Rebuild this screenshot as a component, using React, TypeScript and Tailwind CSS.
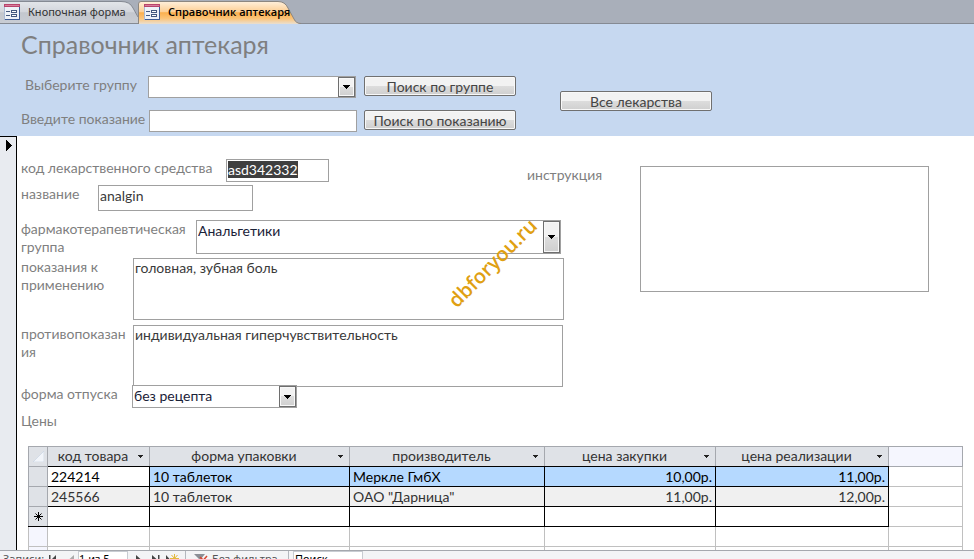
import { useEffect, useRef, type ReactNode } from 'react'

interface Price {
  code: string
  pack: string
  maker: string
  buy: string
  sell: string
}

const prices: Price[] = [
  { code: '224214', pack: '10 таблеток', maker: 'Меркле ГмбХ', buy: '10,00р.', sell: '11,00р.' },
  { code: '245566', pack: '10 таблеток', maker: 'ОАО "Дарница"', buy: '11,00р.', sell: '12,00р.' },
]

const columns = ['код товара', 'форма упаковки', 'производитель', 'цена закупки', 'цена реализации']

const box = 'block border border-[#a0a0a0] bg-white px-px text-sm leading-[18px] text-[#3a3a3a] outline-none'

function FormIcon() {
  return (
    <svg width="16" height="16" viewBox="0 0 16 16" className="shrink-0" shapeRendering="crispEdges">
      <rect width="16" height="15" fill="#eef2f8" />
      <rect width="16" height="3" fill="#b8446c" />
      <rect x="1" y="1" width="14" height="1" fill="#d87c9a" />
      <path d="M0 3v12h15V3" fill="none" stroke="#a9b9d3" />
      <path d="M15 3v12M1 15h15" fill="none" stroke="#3d5c96" />
      <path d="M2 7.5h4M2 11.5h4" stroke="#44597f" />
      <rect x="7.5" y="6.5" width="5" height="2" fill="#fff" stroke="#44597f" />
      <rect x="7.5" y="10.5" width="5" height="2" fill="#fff" stroke="#44597f" />
    </svg>
  )
}

function Tab({ active, children }: { active?: boolean; children: ReactNode }) {
  return (
    <button
      role="tab"
      aria-selected={!!active}
      className={
        active
          ? 'relative flex h-6 w-[163px] items-center gap-2 pl-1.5 font-["Open_Sans"] text-[11px] font-semibold text-black'
          : 'relative flex h-6 w-[138px] items-center gap-2 pl-1 font-["Noto_Sans"] text-[11px] text-[#333]'
      }
    >
      {active ? (
        <svg className="absolute inset-0" width="163" height="24" viewBox="0 0 163 24">
          <defs>
            <linearGradient id="on" x1="0" y1="0" x2="0" y2="1">
              <stop offset="0" stopColor="#fff0dc" />
              <stop offset="0.45" stopColor="#fdcf95" />
              <stop offset="0.5" stopColor="#fbb04f" />
              <stop offset="0.75" stopColor="#fcc376" />
              <stop offset="1" stopColor="#eadfd0" />
            </linearGradient>
          </defs>
          <path d="M.5 24V4Q.5 1.500 3 1.500H140Q147 1.500 150 8L156 19Q158 23.500 163 24Z" fill="url(#on)" />
          <path d="M.5 24V4Q.5 1.500 3 1.500H140Q147 1.500 150 8L156 19Q158 23.500 163 23.500" fill="none" stroke="#8d8780" />
        </svg>
      ) : (
        <svg className="absolute inset-0" width="138" height="24" viewBox="0 0 138 24">
          <defs>
            <linearGradient id="off" x1="0" y1="0" x2="0" y2="1">
              <stop offset="0" stopColor="#e3e6ea" />
              <stop offset="0.45" stopColor="#d3d6dc" />
              <stop offset="0.5" stopColor="#c3c7ce" />
              <stop offset="1" stopColor="#c9cdd4" />
            </linearGradient>
          </defs>
          <path d="M0 24V1.500H121Q130 1.500 133 8L138 17V24Z" fill="url(#off)" />
          <path d="M0 1.500H121Q130 1.500 133 8L138 17M0 23.500H138" fill="none" stroke="#858a93" />
        </svg>
      )}
      <span className="relative">
        <FormIcon />
      </span>
      <span className="relative whitespace-nowrap">{children}</span>
    </button>
  )
}

function Combo({ id, value, className }: { id: string; value: string; className: string }) {
  return (
    <div className={`relative shrink-0 border border-[#a0a0a0] bg-white ${className}`}>
      <select
        id={id}
        className="block h-full w-full appearance-none bg-transparent px-px pb-px text-sm leading-[18px] text-[#1a2238] outline-none"
      >
        <option>{value}</option>
      </select>
      <span className="pointer-events-none absolute inset-y-0 right-0 flex w-[17px] items-center justify-center border border-[#6e6e6e] bg-linear-to-b from-[#f2f2f2] from-50% via-[#dddddd] via-50% to-[#cfcfcf] shadow-[inset_0_0_0_1px_#f8f8f8]">
        <svg width="7" height="4" viewBox="0 0 7 4" shapeRendering="crispEdges">
          <path d="M0 0h7v1H6v1H5v1H4v1H3V3H2V2H1V1H0z" fill="#000" />
        </svg>
      </span>
    </div>
  )
}

function PushButton({ children }: { children: ReactNode }) {
  return (
    <button className="h-5 w-[152px] shrink-0 overflow-hidden rounded-xs border border-[#707070] bg-linear-to-b from-[#f2f2f2] from-50% via-[#dddddd] via-50% to-[#cfcfcf] pt-px text-sm leading-[18px] text-[#444] shadow-[inset_0_0_0_1px_#f8f8f8]">
      {children}
    </button>
  )
}

function Field({ id, label, labelClass, className, children }: {
  id: string
  label: string
  labelClass: string
  className?: string
  children: ReactNode
}) {
  return (
    <div className={`flex items-start ${className ?? ''}`}>
      <label htmlFor={id} className={`shrink-0 ${labelClass}`}>
        {label}
      </label>
      {children}
    </div>
  )
}

function PriceTable() {
  const cell = 'border border-black px-[3px]'
  const spare = 'border border-[#c0c0c0]'
  return (
    <table className="h-[121px] w-full table-fixed border-collapse text-sm leading-[18px] text-[#333]">
      <colgroup>
        <col className="w-[19px]" />
        <col className="w-[102px]" />
        <col className="w-[200px]" />
        <col className="w-[195px]" />
        <col className="w-[171px]" />
        <col className="w-[173px]" />
        <col />
      </colgroup>
      <thead>
        <tr className="h-5 bg-[#dfe2e7]">
          <th className="border border-[#a5a8ae] p-0">
            <svg width="11" height="11" viewBox="0 0 11 11" className="ml-1">
              <path d="M11 0v11H0z" fill="#f2f5fa" stroke="#c5d2e2" strokeWidth=".6" />
            </svg>
          </th>
          {columns.map((c) => (
            <th key={c} className="border border-[#a5a8ae] border-b-black p-0 font-normal">
              <div className="flex items-center pr-1.5">
                <span className="flex-1 pb-px text-center">{c}</span>
                <svg width="5" height="3" viewBox="0 0 5 3" shapeRendering="crispEdges">
                  <path d="M0 0h5v1H4v1H3v1H2V2H1V1H0z" fill="#222" />
                </svg>
              </div>
            </th>
          ))}
          <th className="border border-[#a5a8ae] border-l-black bg-[#f5f6fe] p-0" />
        </tr>
      </thead>
      <tbody>
        {prices.map((p, i) => (
          <tr key={p.code} className={i === 0 ? 'h-5 bg-[#b5d9ff] text-black' : 'h-5 bg-[#f0f0f0]'}>
            <td className="border border-[#a5a8ae] bg-[#dfe2e7]" />
            <td className={i === 0 ? `${cell} bg-white` : cell}>{p.code}</td>
            <td className={cell}>{p.pack}</td>
            <td className={cell}>{p.maker}</td>
            <td className={`${cell} text-right`}>{p.buy}</td>
            <td className={`${cell} text-right`}>{p.sell}</td>
            <td className={`${spare} bg-white`} />
          </tr>
        ))}
        <tr className="h-5">
          <td className="border border-[#a5a8ae] border-b-black bg-[#dfe2e7] p-0">
            <svg width="9" height="9" viewBox="0 0 9 9" className="mx-auto">
              <path d="M4.500 0v9M0 4.500h9M1.500 1.500l6 6M7.500 1.500l-6 6" stroke="#000" />
            </svg>
          </td>
          {columns.map((c) => (
            <td key={c} className={cell} />
          ))}
          <td className={spare} />
        </tr>
        <tr className="h-5">
          <td className={`${spare} bg-[#f5f6fe]`} />
          {columns.map((c) => (
            <td key={c} className={spare} />
          ))}
          <td className={spare} />
        </tr>
        <tr className="h-5">
          <td className={`${spare} bg-[#f5f6fe]`} />
          {columns.map((c) => (
            <td key={c} className={spare} />
          ))}
          <td className={spare} />
        </tr>
      </tbody>
    </table>
  )
}

export default function App() {
  const codeRef = useRef<HTMLInputElement>(null)

  useEffect(() => {
    codeRef.current?.focus()
    codeRef.current?.select()
  }, [])

  return (
    <div className='flex h-screen flex-col overflow-hidden bg-white font-["Lato","Open_Sans",sans-serif] text-sm leading-[18px] text-[#7f7f7f]'>
      <div role="tablist" className="flex h-6 shrink-0 border-b border-[#858a93] bg-[#a9afba]">
        <Tab>Кнопочная форма</Tab>
        <Tab active>Справочник аптекаря</Tab>
      </div>

      <header className="shrink-0 bg-[#c6d8f0] pt-1 pb-1 pl-[21px]">
        <h1 className="text-[25px] leading-8">Справочник аптекаря</h1>
        <div className="flex items-start gap-11 pt-4">
          <div className="flex flex-col gap-3">
            <div className="flex">
              <label htmlFor="group" className="w-[127px] shrink-0 pl-1">Выберите группу</label>
              <Combo id="group" value="" className="mr-2 h-[22px] w-52" />
              <PushButton>Поиск по группе</PushButton>
            </div>
            <div className="flex">
              <label htmlFor="symptom" className="w-32 shrink-0">Введите показание</label>
              <input id="symptom" className={`${box} mr-[7px] h-[22px] w-52`} />
              <PushButton>Поиск по показанию</PushButton>
            </div>
          </div>
          <div className="pt-[15px]">
            <PushButton>Все лекарства</PushButton>
          </div>
        </div>
      </header>

      <main className="flex min-h-0 flex-1 overflow-hidden">
        <div className="w-[17px] shrink-0 border-t border-r border-black bg-[#e8ebf0] pt-[3px] pl-1.5">
          <svg width="6" height="11" viewBox="0 0 6 11" shapeRendering="crispEdges">
            <path d="M0 0L6 5.500L0 11z" fill="#000" />
          </svg>
        </div>
        <div className="relative min-w-0 flex-1 pt-[23px] pr-[11px] pl-1">
          <div className="grid grid-cols-[506px_37px_1fr]">
            <div className="col-start-1 col-end-3 row-start-1">
              <Field id="code" label="код лекарственного средства" labelClass="w-[205px]">
                <input
                  id="code"
                  ref={codeRef}
                  defaultValue="asd342332"
                  className={`${box} h-[23px] w-[103px] pb-0.5 selection:bg-[#3f3f3f] selection:text-white`}
                />
              </Field>
              <Field id="name" label="название" labelClass="w-[77px]" className="mt-[3px]">
                <input id="name" defaultValue="analgin" className={`${box} h-[26px] w-[155px] pb-1.5`} />
              </Field>
              <Field id="kind" label="фармакотерапевтическая группа" labelClass="w-[175px]" className="mt-[9px]">
                <Combo id="kind" value="Анальгетики" className="h-[34px] w-[365px] [&>select]:pb-3" />
              </Field>
              <Field id="use" label="показания к применению" labelClass="w-28" className="mt-0.5">
                <textarea
                  id="use"
                  defaultValue="головная, зубная боль"
                  className={`${box} h-[62px] w-[431px] shrink-0 resize-none`}
                />
              </Field>
              <Field id="avoid" label="противопоказания" labelClass="w-28 break-all pr-1" className="mt-[5px]">
                <textarea
                  id="avoid"
                  defaultValue="индивидуальная гиперчувствительность"
                  className={`${box} h-[62px] w-[430px] shrink-0 resize-none`}
                />
              </Field>
              <Field id="release" label="форма отпуска" labelClass="w-[111px]" className="-mt-0.5">
                <Combo id="release" value="без рецепта" className="h-[23px] w-[165px]" />
              </Field>
            </div>
            <div className="col-start-2 col-end-4 row-start-1 flex items-start self-start pt-[7px]">
              <label htmlFor="manual" className="w-[113px] shrink-0">инструкция</label>
              <textarea id="manual" className={`${box} h-[126px] w-full max-w-[289px] resize-none`} />
            </div>
          </div>

          <h2 className="pt-1">Цены</h2>
          <div className="pt-4 pl-[7px]">
            <PriceTable />
          </div>

          <span className='pointer-events-none absolute top-[115px] left-[418px] -rotate-45 font-["Open_Sans"] text-xl leading-6 font-semibold text-[#e0a012]'>
            dbforyou.ru
          </span>
        </div>
      </main>

      <footer className='h-[9px] shrink-0 overflow-hidden border-t border-[#a5a8ae] bg-[#f3f4f6] font-["Noto_Sans"] text-[11px] leading-4 text-[#555]'>
        <div className="flex h-4 items-center pl-[3px]">
          <span className="w-[46px]">Записи:</span>
          <button aria-label="Первая запись" className="w-5">
            <svg width="8" height="9" viewBox="0 0 8 9"><path d="M0 0h1.500v9H0zM7 0v9L2.500 4.500z" fill="#444" /></svg>
          </button>
          <button aria-label="Предыдущая запись" className="w-[9px]">
            <svg width="5" height="9" viewBox="0 0 5 9"><path d="M5 0v9L0 4.500z" fill="#aaa" /></svg>
          </button>
          <input aria-label="Текущая запись" defaultValue="1 из 5" className="h-4 w-[50px] border border-[#c8ccd2] bg-white text-black" />
          <button aria-label="Следующая запись" className="ml-2 w-4">
            <svg width="5" height="9" viewBox="0 0 5 9"><path d="M0 0v9L5 4.500z" fill="#444" /></svg>
          </button>
          <button aria-label="Последняя запись" className="w-[14px]">
            <svg width="8" height="9" viewBox="0 0 8 9"><path d="M6 0h1.500v9H6zM0 0v9L5 4.500z" fill="#444" /></svg>
          </button>
          <button aria-label="Новая запись" className="w-[19px]">
            <svg width="13" height="10" viewBox="0 0 13 10">
              <path d="M0 1v9L4 5.500z" fill="#444" />
              <path d="M8.500 0v9M4 4.500h9M5.500 1l6 7M11.500 1l-6 7" stroke="#e3b93c" />
            </svg>
          </button>
          <button className="flex h-4 w-[104px] items-center gap-1 border-x border-[#b4b8be] pl-2 whitespace-nowrap">
            <svg width="14" height="12" viewBox="0 0 14 12">
              <path d="M0 1h11L7 6v6L5 10V6z" fill="#8b8f96" />
              <path d="M6 4l7 7M13 3l-7 8" stroke="#d8452e" strokeWidth="1.500" />
            </svg>
            Без фильтра
          </button>
          <input aria-label="Поиск" defaultValue="Поиск" className="ml-1 h-4 w-[70px] border border-[#c8ccd2] bg-white px-px text-black" />
        </div>
      </footer>
    </div>
  )
}
